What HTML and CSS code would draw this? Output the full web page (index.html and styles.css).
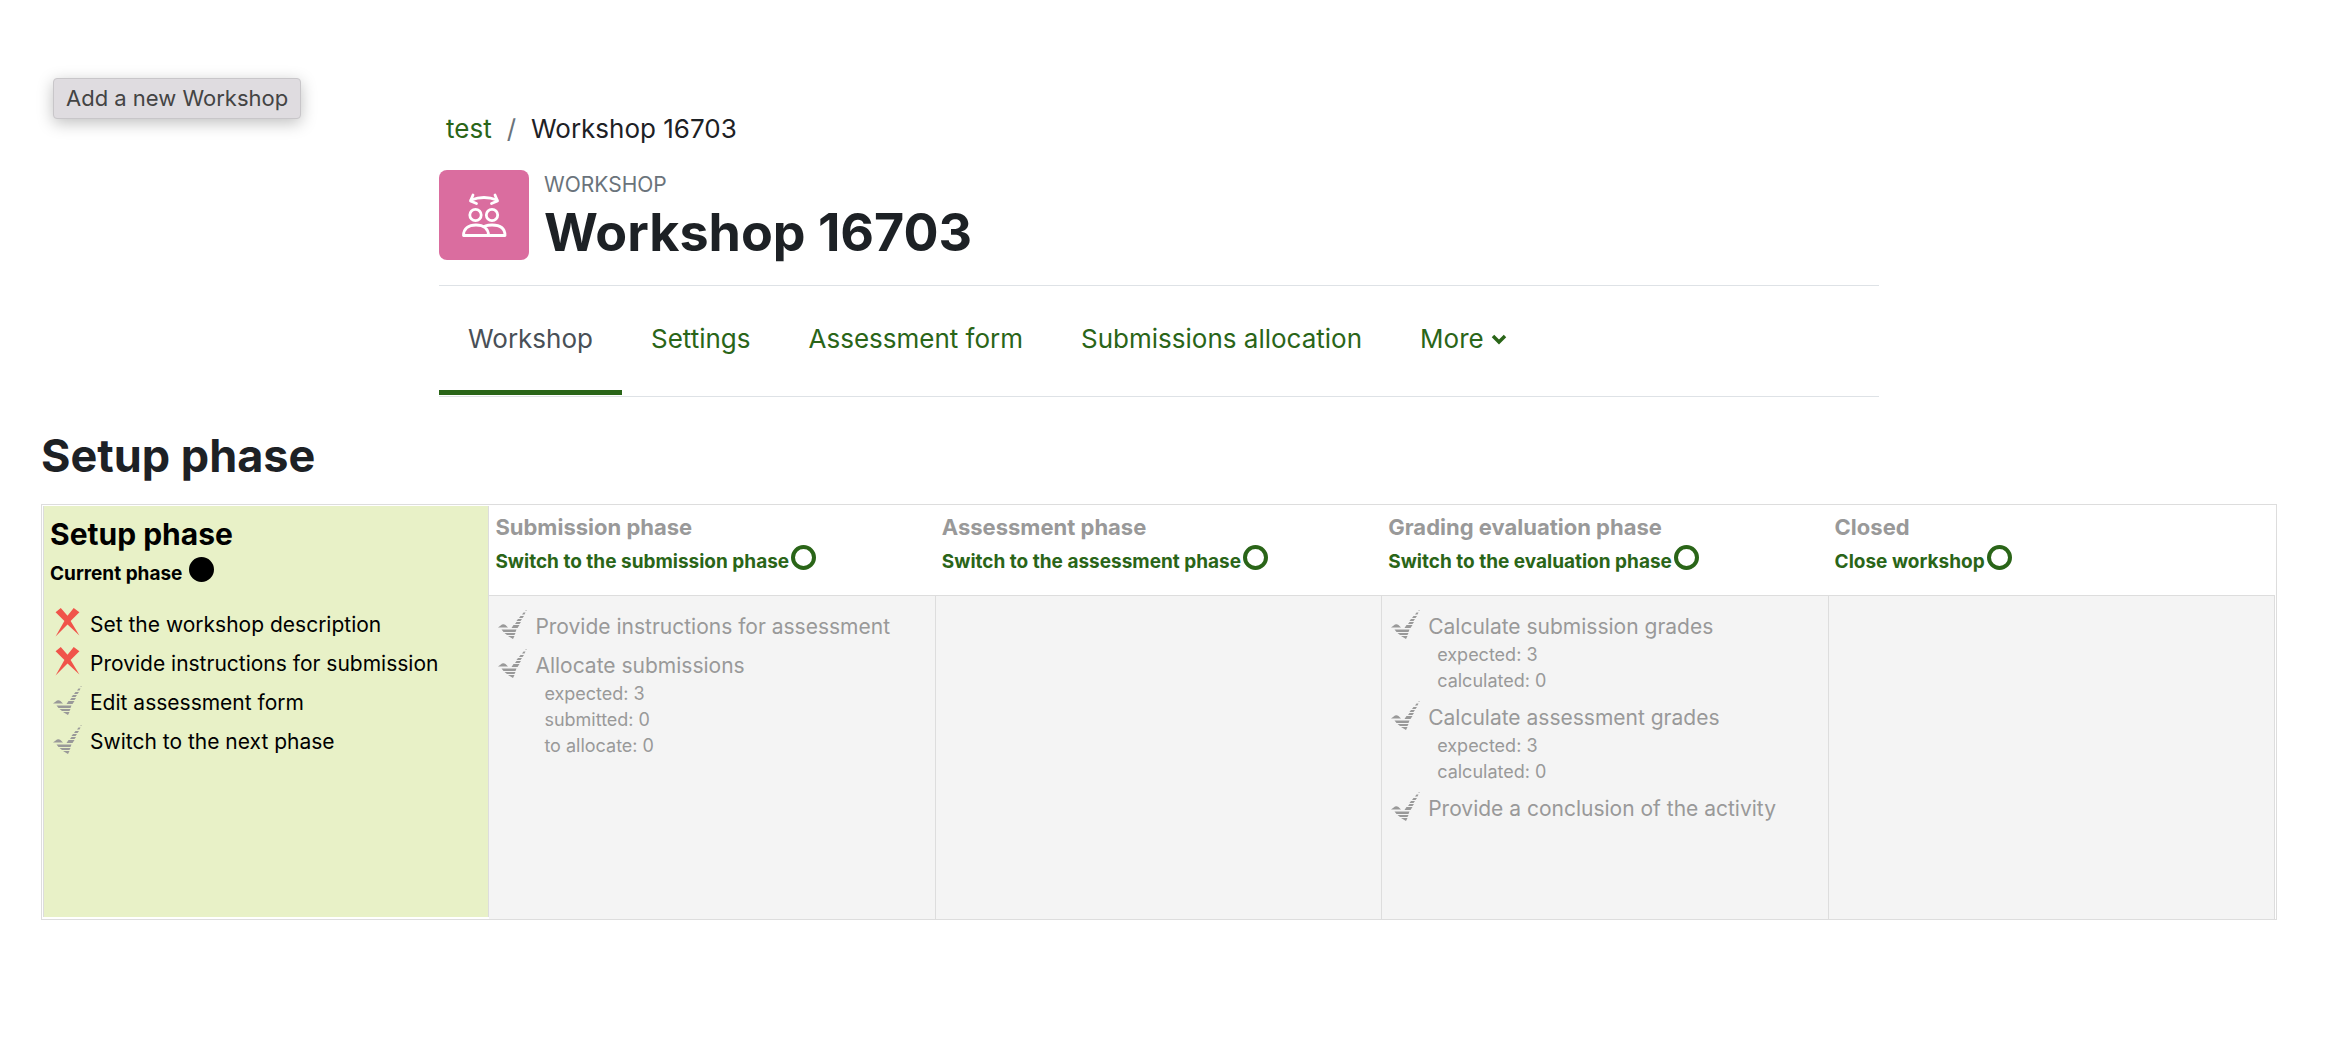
FILE: index.html
```
<!DOCTYPE html>
<html lang="en">
<head>
  <meta charset="UTF-8">
  <title>Workshop 16703</title>
  <link rel="stylesheet" href="styles.css">
</head>
<body>
  <svg class="sprite" aria-hidden="true">
    <symbol id="cross" viewBox="0 0 24 28">
      <path fill="#f0544a" d="M0.500 4 5.500 0 12 7.500 18 0 23.500 4 15 12.500 23.500 26.500 12 16 0.500 27.500 9 12.500Z"/>
    </symbol>
    <symbol id="check" viewBox="0 0 29 29">
      <path fill="#999" d="M28.500 0h.5l-1 1h-1zM25.500 2.500h2l-1 2h-2.500zM22.500 6h3.500l-1.500 2h-3.500zM20 9h4l-1.500 2h-4zM18.500 12h4.500l-1.500 2h-4.500zM0 17.500 4 14.500Q6 14 7.500 15L10 17.500zM15.500 15h6l-2 3h-6zM3.500 19.500h15l-1 2.500H5.500zM6.500 23h11l-1 2H9zM10 26h6.500l-1.500 3z"/>
    </symbol>
  </svg>

  <header class="page-header">
    <button type="button" class="add-btn">Add a new Workshop</button>
    <div class="context">
      <nav class="breadcrumb" aria-label="Breadcrumb">
        <a href="#">test</a>
        <span class="sep">/</span>
        <span>Workshop 16703</span>
      </nav>
      <div class="title">
        <div class="activity-icon">
          <svg viewBox="0 0 90 90" width="90" height="90" fill="none" stroke="#fff" stroke-width="2.800" stroke-linecap="round" stroke-linejoin="round">
            <path d="M32 30q13-5 26 0"/>
            <path d="M34 25l-2.500 6 6 2.500M56 25l2.500 6-6 2.500"/>
            <circle cx="36.500" cy="45" r="5.700"/>
            <circle cx="53" cy="45" r="5.700"/>
            <path d="M24.500 65.500c0-7 5-10.500 12.500-10.500s12.500 3.500 12.500 10.500zM46 56q3-1 7-1c8 0 13 3.500 13 10.500H50"/>
          </svg>
        </div>
        <div>
          <div class="type">WORKSHOP</div>
          <h1>Workshop 16703</h1>
        </div>
      </div>
      <nav class="tabs" aria-label="Workshop">
        <a href="#" class="active">Workshop</a>
        <a href="#">Settings</a>
        <a href="#">Assessment form</a>
        <a href="#">Submissions allocation</a>
        <a href="#">More
          <svg viewBox="0 0 16 14" width="16" height="14" fill="none" stroke="currentColor" stroke-width="3.500"><path d="M2 2l6 6 6-6"/></svg>
        </a>
      </nav>
    </div>
  </header>

  <main>
    <h2>Setup phase</h2>
    <div class="plan">
      <section class="phase current">
        <div class="phase-head">
          <h3>Setup phase</h3>
          <p class="switch">Current phase <span class="dot"></span></p>
        </div>
        <ul class="tasks">
          <li><svg><use href="#cross"/></svg>Set the workshop description</li>
          <li><svg><use href="#cross"/></svg>Provide instructions for submission</li>
          <li><svg><use href="#check"/></svg>Edit assessment form</li>
          <li><svg><use href="#check"/></svg>Switch to the next phase</li>
        </ul>
      </section>
      <section class="phase">
        <div class="phase-head">
          <h3>Submission phase</h3>
          <a href="#" class="switch">Switch to the submission phase<span class="ring"></span></a>
        </div>
        <ul class="tasks">
          <li><svg><use href="#check"/></svg>Provide instructions for assessment</li>
          <li><svg><use href="#check"/></svg>Allocate submissions
            <div class="details">expected: 3<br>submitted: 0<br>to allocate: 0</div>
          </li>
        </ul>
      </section>
      <section class="phase">
        <div class="phase-head">
          <h3>Assessment phase</h3>
          <a href="#" class="switch">Switch to the assessment phase<span class="ring"></span></a>
        </div>
        <ul class="tasks"></ul>
      </section>
      <section class="phase">
        <div class="phase-head">
          <h3>Grading evaluation phase</h3>
          <a href="#" class="switch">Switch to the evaluation phase<span class="ring"></span></a>
        </div>
        <ul class="tasks">
          <li><svg><use href="#check"/></svg>Calculate submission grades
            <div class="details">expected: 3<br>calculated: 0</div>
          </li>
          <li><svg><use href="#check"/></svg>Calculate assessment grades
            <div class="details">expected: 3<br>calculated: 0</div>
          </li>
          <li><svg><use href="#check"/></svg>Provide a conclusion of the activity</li>
        </ul>
      </section>
      <section class="phase">
        <div class="phase-head">
          <h3>Closed</h3>
          <a href="#" class="switch">Close workshop<span class="ring"></span></a>
        </div>
        <ul class="tasks"></ul>
      </section>
    </div>
  </main>
</body>
</html>
```
FILE: styles.css
```
* {
  box-sizing: border-box;
}
body {
  margin: 0;
  padding: 78px 59px 40px 41px;
  font-family: Inter, sans-serif;
  color: #1d2125;
  background: #fff;
}
a {
  color: #2a6518;
  text-decoration: none;
}
h1, h2, h3, p, ul {
  margin: 0;
  padding: 0;
}
.sprite {
  display: none;
}

/* header */
.page-header {
  display: grid;
  grid-template-columns: 398px 1fr 398px;
  align-items: start;
}
.add-btn {
  justify-self: start;
  margin-left: 12px;
  height: 41px;
  padding: 0 12px 2px;
  font-family: inherit;
  font-size: 22px;
  color: #444;
  background: #dfdce0;
  border: 1px solid #c8c6c9;
  border-radius: 4px;
  box-shadow: 0 4px 16px rgba(0, 0, 0, 0.25);
}
.breadcrumb {
  display: flex;
  gap: 15px;
  padding: 34px 0 0 7px;
  font-size: 26px;
  line-height: 34px;
}
.sep {
  color: #6a737b;
}
.title {
  display: flex;
  gap: 15px;
  margin-top: 24px;
  padding-bottom: 25px;
  border-bottom: 1px solid #dee2e6;
}
.activity-icon {
  width: 90px;
  height: 90px;
  border-radius: 8px;
  background: #da6d9f;
}
.type {
  font-size: 21px;
  line-height: 30px;
  color: #6a737b;
}
h1 {
  font-size: 52px;
  line-height: 66px;
  height: 60px;
}
.tabs {
  display: flex;
  padding-bottom: 1px;
  border-bottom: 1px solid #dee2e6;
}
.tabs a {
  padding: 35px 29px 33px;
  font-size: 26px;
  line-height: 36px;
  border-bottom: 5px solid transparent;
}
.tabs .active {
  color: #495057;
  border-color: #2a6518;
}

/* phases */
h2 {
  margin-top: 34px;
  font-size: 45px;
  line-height: 50px;
}
.plan {
  display: grid;
  grid-template-columns: repeat(5, 1fr);
  grid-template-rows: auto 1fr;
  min-height: 416px;
  margin-top: 23px;
  padding: 1px 1px 0;
  border: 1px solid #ddd;
}
.phase {
  display: grid;
  grid-row: span 2;
  grid-template-rows: subgrid;
  color: #999;
}
.phase-head {
  padding: 7px 6px 4px;
}
h3 {
  font-size: 22px;
  line-height: 28px;
}
.switch {
  display: block;
  margin-top: 4px;
  font-size: 19px;
  line-height: 34px;
  font-weight: 700;
}
.ring, .dot {
  display: inline-block;
  width: 25px;
  height: 25px;
  margin-left: 2px;
  border: 4px solid #2a6518;
  border-radius: 50%;
  vertical-align: -2px;
}
.tasks {
  padding: 16px 9px;
  list-style: none;
  font-size: 21px;
  line-height: 30px;
  background: #f4f4f4;
  border-top: 1px solid #ddd;
  border-right: 1px solid #ddd;
}
.tasks li {
  padding: 0 0 9px 37px;
}
.tasks svg {
  float: left;
  width: 29px;
  height: 29px;
  margin: -2px 0 0 -37px;
}
.details {
  padding-left: 9px;
  font-size: 18px;
  line-height: 26px;
}
.current {
  color: #000;
  background: #e8f1c7;
  border: solid #ddd;
  border-width: 0 1px;
  margin-bottom: 2px;
}
.current h3 {
  font-size: 30px;
  line-height: 42px;
}
.current .switch {
  margin-top: 2px;
}
.current .dot {
  background: #000;
  border-color: #000;
}
.current .tasks {
  padding-top: 15px;
  background: none;
  border: 0;
}
```
